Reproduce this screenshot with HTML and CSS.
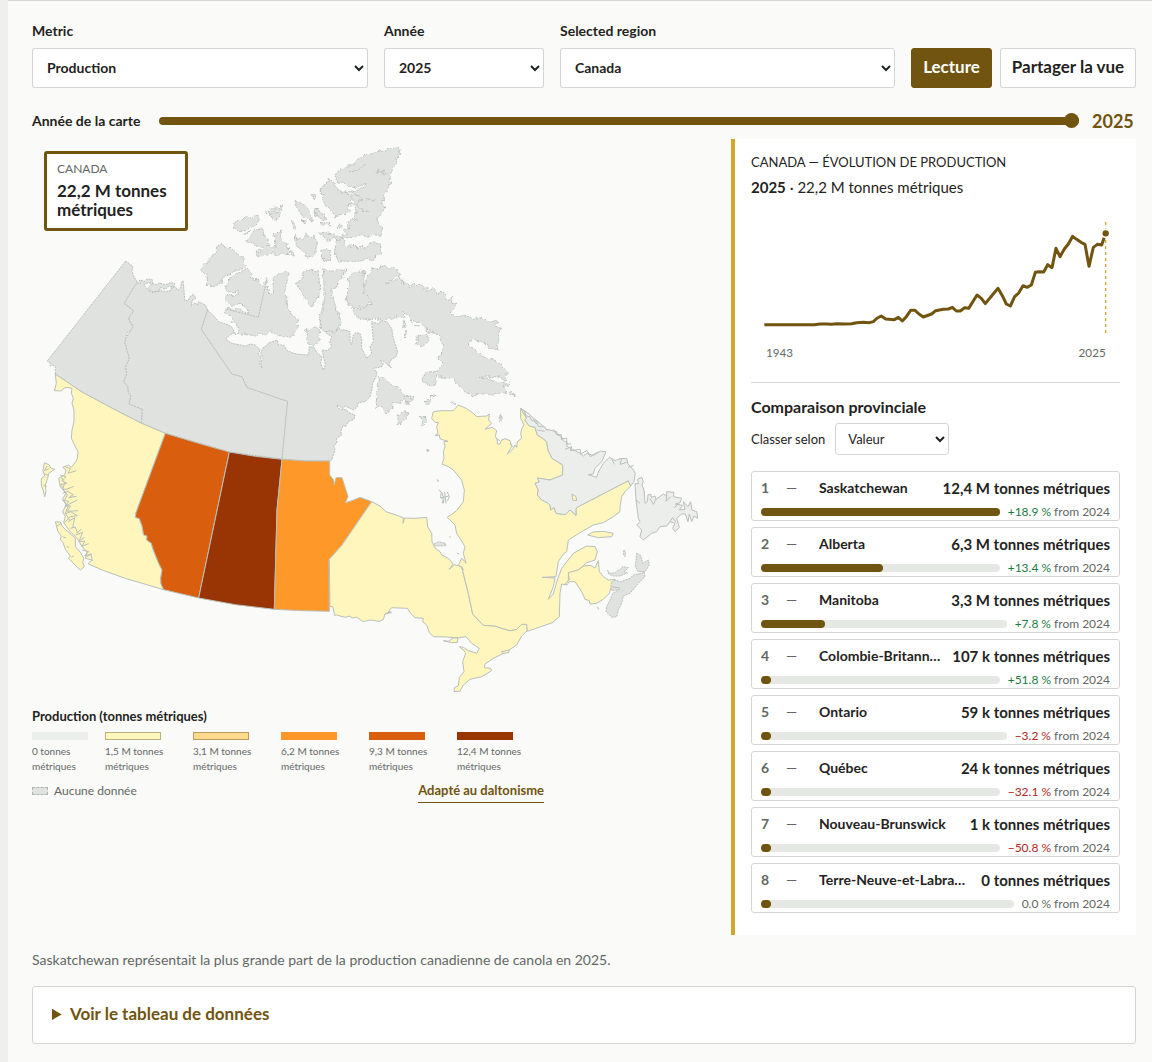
FILE: index.html
```html
<!DOCTYPE html>
<html lang="fr">
<head>
<meta charset="utf-8">
<meta name="viewport" content="width=device-width, initial-scale=1">
<title>Canola – Production</title>
<link rel="stylesheet" href="styles.css">
</head>
<body>
<main class="explorer">
  <form class="controls">
    <div class="field"><label for="metric">Metric</label><select id="metric"><option>Production</option></select></div>
    <div class="field"><label for="year">Année</label><select id="year"><option>2025</option></select></div>
    <div class="field"><label for="region">Selected region</label><select id="region"><option>Canada</option></select></div>
    <div class="actions">
      <button type="button" class="btn btn-primary">Lecture</button>
      <button type="button" class="btn btn-share">Partager la vue</button>
    </div>
  </form>
  <div class="timeline">
    <label for="map-year">Année de la carte</label>
    <input id="map-year" type="range" min="1943" max="2025" value="2025">
    <output for="map-year">2025</output>
  </div>
  <div class="workspace">
    <section class="map-panel">
      <div class="map">
        <div class="map-card"><span class="map-card-name">Canada</span><strong>22,2 M tonnes métriques</strong></div>
        <svg class="map-svg" viewBox="0 -273 2049 1680" role="img" aria-label="Carte du Canada">
          <defs>
            <filter id="coast" x="-5%" y="-5%" width="110%" height="110%">
              <feTurbulence type="fractalNoise" baseFrequency="0.05" numOctaves="2" seed="4" result="n"/>
              <feDisplacementMap in="SourceGraphic" in2="n" scale="22" xChannelSelector="R" yChannelSelector="G"/>
            </filter>
          </defs>
          <g class="nodata">
            <path d="M281 93L303 110L300 122L304 136L316 157L300 180L290 200L277 220L305 242L298 258L290 264L294 278L304 290L298 303L285 308L281 325L279 340L288 360L292 385L290 402L281 410L284 432L280 448L275 455L288 470L289 488L297 498L291 522L310 530L331 537L329 580L260 545L150 486L70 432L70 410L62 405L55 408L54 398L46 393Z"/>
            <path d="M316 157L325 162L322 150L338 154L345 147L360 148L362 160L348 158L335 164L345 176L352 170L360 160L375 165L382 158L400 165L415 158L428 160L425 172L410 168L400 178L385 172L382 184L362 185L350 180L358 188L390 182L400 185L420 180L416 170L430 170L436 180L446 174L448 158L453 152L456 180L458 212L468 212L474 200L484 193L492 204L480 212L478 226L490 218L496 226L500 215L520 225L527 240L508 298L600 432L630 440L645 472L767 514L750 687L592 666L400 610L329 580L331 537L310 530L291 522L297 498L289 488L288 470L275 455L284 432L281 410L292 385L279 340L281 325L304 290L290 264L305 242L277 220L300 180Z"/>
            <path d="M527 240L545 258L560 275L575 280L590 285L600 292L612 315L606 308L590 318L580 328L600 340L620 344L640 348L655 342L670 345L685 360L678 372L688 380L682 400L690 414L686 396L694 385L686 370L692 355L712 338L735 330L740 345L755 345L765 362L785 370L800 373L830 375L832 350L845 352L856 370L870 380L866 400L874 420L880 405L876 386L870 360L885 362L900 350L893 336L900 320L886 312L868 295L864 262L872 230L882 208L896 210L904 226L909 240L924 250L914 275L924 300L939 300L954 305L954 330L959 345L964 315L972 308L984 310L989 330L989 355L1004 385L1019 370L1014 350L1024 335L1019 275L1040 282L1048 272L1064 275L1079 295L1084 325L1097 365L1092 380L1079 388L1070 402L1079 415L1064 402L1050 390L1044 392L1054 400L1050 410L1024 415L1034 425L1034 435L1022 460L1020 478L1014 500L999 515L979 518L976 530L964 540L940 528L934 535L914 525L920 536L944 540L950 548L969 555L966 568L950 574L940 590L934 585L926 605L929 615L914 625L914 640L905 646L909 660L899 690L893 693L820 693L750 687L767 514L645 472L630 440L600 432L508 298Z"/>
          </g>
          <g class="nodata" filter="url(#coast)" transform="translate(474 -270)">
            <path d="M82 312L115 320L140 340L160 355L172 380L130 395L100 415L85 435L50 437L48 405L30 388L55 360L82 335Z"/>
            <path d="M105 435L130 405L175 388L185 400L180 415L205 420L210 435L230 418L235 440L240 465L250 465L250 410L268 405L280 395L297 400L290 430L285 450L290 500L325 545L320 570L300 590L260 590L245 570L225 585L180 585L145 580L140 555L120 535L105 520L110 505L150 510L175 520L180 510L155 495L110 490L105 475L110 465L145 462L145 455L110 455Z"/>
            <path d="M318 430L345 410L335 395L385 395L390 460L375 485L362 500L345 480L330 450Z"/>
            <path d="M400 390L465 390L445 435L425 450L430 475L450 545L440 575L395 570L390 545L402 490L402 440Z"/>
            <path d="M350 570L375 560L395 575L390 600L370 615L350 600Z"/>
            <path d="M130 250L175 230L205 228L208 245L185 262L150 272L135 268ZM170 300L195 272L215 270L235 300L235 320L258 320L255 285L270 270L275 305L295 310L295 340L265 345L245 340L215 352L197 345L200 335L220 325L190 315Z"/>
            <path d="M238 220L265 218L270 235L250 243ZM225 217L245 215L240 205L275 198L275 212ZM155 285L180 274L162 290ZM315 185L330 185L350 205L368 240L345 235L325 215ZM378 208L390 212L410 238L395 243L380 228ZM303 240L317 265L308 262ZM335 242L347 240L345 248Z"/>
            <path d="M315 285L320 300L335 302L345 285L375 288L380 320L372 345L355 352L350 335L330 328L312 310ZM392 335L410 328L425 345L420 365L400 362ZM300 335L314 336L308 346ZM393 248L422 248L420 258L395 255ZM445 250L457 258L445 265ZM362 165L372 162L375 174ZM388 275L420 280L435 290L425 302L400 295Z"/>
            <path d="M440 300L460 295L465 315L490 320L530 320L540 308L570 310L575 340L545 358L490 365L445 362L435 330Z"/>
            <path d="M415 118L430 125L435 142L470 155L485 180L475 200L480 215L460 225L440 230L425 215L400 190L395 160L400 130Z"/>
            <path d="M625 22L630 30L615 70L600 110L595 150L580 170L582 200L560 240L575 265L570 285L530 285L500 290L465 290L435 300L430 292L470 280L460 270L480 262L470 245L500 240L498 215L490 195L470 195L510 185L490 160L475 155L520 145L535 125L510 138L480 140L445 128L430 105L470 80L490 75L500 60L545 40L600 25Z"/>
            <path d="M455 155L490 165L520 180L500 190L480 170M500 195L520 210L540 215M565 90L580 95L560 100L590 102M480 95L510 85L530 70M550 180L530 175L525 190" fill="none"/>
          </g>
          <g class="nodata" filter="url(#coast)" transform="translate(894 60)">
            <path d="M152 52L190 50L212 70L215 82L195 78L170 98L190 95L200 85L215 85L215 98L230 95L240 105L242 118L252 104L270 102L278 118L290 108L295 122L308 118L320 125L322 138L330 124L350 130L345 145L365 145L365 160L383 160L370 172L362 190L385 200L400 195L430 205L445 200L470 212L500 215L498 228L512 232L504 245L514 262L504 275L509 300L480 295L475 282L455 275L425 268L412 285L430 300L460 320L490 328L515 345L530 365L526 388L495 380L450 382L500 395L540 400L520 408L530 430L490 435L450 432L430 438L400 420L370 390L330 380L320 365L342 345L322 325L335 305L337 270L310 245L270 225L250 210L220 185L225 205L200 200L170 205L110 210L80 200L65 180L115 170L125 160L105 140L100 110L110 80L125 60Z"/>
            <path d="M60 80L75 65L105 62L98 90L105 130L122 155L115 168L62 175L52 140ZM262 250L290 250L293 275L280 292L260 285ZM220 205L226 228L220 232ZM228 240L232 258L226 262ZM240 210L250 218ZM255 228L268 232ZM290 240L312 250L300 254Z"/>
            <path d="M145 375L155 380L165 395L200 410L222 430L245 440L245 455L215 455L190 460L180 480L168 488L155 470L135 472L142 440L145 410ZM222 440L250 438L252 450L235 460ZM280 370L300 365L320 370L318 400L300 410L280 400ZM205 495L230 487L228 505L205 522L200 505ZM270 500L285 500L287 520L275 530ZM285 452L300 448L305 458L290 460ZM300 440L318 438L312 444ZM508 498L516 500L512 512ZM535 430L545 428L554 440L545 440ZM290 602L298 602ZM362 460L374 460Z"/>
          </g>
          <path class="boundary" d="M704 150L679 262L579 236"/>
          <path class="v1" d="M70 432L150 486L260 545L329 580L400 610L312 848L310 862L322 866L330 888L335 915L345 918L344 930L358 940L362 955L372 980L380 1000L390 1020L386 1045L387 1062L395 1079L280 1045L210 1020L168 1001L180 990L160 985L165 965L150 950L140 932L130 920L115 905L95 878L100 860L92 846L102 825L92 806L102 790L85 770L80 745L98 735L102 720L92 712L110 705L118 712L135 690L138 665L130 650L118 625L120 600L126 575L126 540L120 520L124 505L118 490L120 475L105 472L95 475L88 483L67 482L73 460Z"/>
          <path class="inlet" d="M98 710l18 6l-8 14l25-8M84 735l18 5l-12 12l15 8l-20 4l14 15l27-10M92 790l14-6l18 10l-14 9l24-4M90 810l20 4l-10 14l36-18M98 830l18-3l-10 17l32-2M98 852l18-7l20 12l-22 3l-16 18M108 875l20-12l-6 30M115 895l15-4l6 18l12-12M130 915l22-8l-10 25l16-10M140 935l18-2l-8 16l20-8M150 960l20 5l-12 12l22-5M165 980l12-8l4 20M88 742l10 18l-6 16l14 18l-10 20l12 16l-8 20l14 22"/>
          <path class="v1" d="M38 698L52 705L56 714L68 718L50 730L47 745L40 765L42 785L38 800L33 780L28 765L28 745L38 738L33 722L35 708ZM70 875L85 876L90 888L100 898L130 925L130 950L146 968L155 985L152 996L157 1010L145 1020L130 1006L110 985L115 978L100 958L94 940L85 928L88 918L78 905Z"/>
          <path class="inlet" d="M45 708l-8 14l14-6M38 732l12 4M34 765l10 4M75 888l14-8M92 920l10 4M104 950l8 2M118 982l8-5"/>
          <path class="v4" d="M400 610L500 640L592 666L500 1104L395 1079L387 1062L386 1045L390 1020L380 1000L372 980L362 955L358 940L344 930L345 918L335 915L330 888L322 866L310 862L312 848Z"/>
          <path class="v5" d="M592 666L670 679L750 688L735 840L727 1138L610 1124L500 1104Z"/>
          <path class="v3" d="M750 688L820 693L893 693L893 735L905 750L907 765L912 743L930 743L948 800L940 818L960 812L984 802L1019 815L930 945L891 988L892 1144L810 1142L727 1138L735 840Z"/>
          <g transform="translate(864 480)">
            <path class="v1" d="M155 335L180 348L198 365L225 374L250 383L249 400L254 384L285 385L320 382L323 410L335 430L336 455L345 474L360 485L365 495L385 505L400 522L388 538L402 524L425 530L435 570L445 610L458 672L490 706L525 708L545 715L570 722L590 718L605 703L620 703L622 722L605 738L590 765L555 788L520 805L495 822L493 833L512 835L515 842L485 860L450 868L430 885L420 903L402 905L403 893L415 888L418 862L432 845L428 815L437 790L432 782L418 770L430 772L445 782L470 790L478 775L455 760L438 740L413 744L380 741L340 740L328 728L320 705L308 695L310 685L285 683L272 670L262 655L215 653L205 665L212 668L195 672L190 688L180 694L150 690L130 695L110 682L95 684L90 678L75 682L50 675L44 676L38 650L30 650L28 508L66 465ZM370 752L385 754L400 744L413 742L413 757L395 758Z"/>
            <path class="v1" d="M340 65L365 62L400 62L415 45L440 56L460 70L470 80L500 78L508 72L506 90L515 100L495 118L516 112L530 122L526 140L532 150L532 162L540 162L545 150L555 146L570 152L575 170L562 192L580 176L585 165L590 172L592 155L605 145L602 130L606 115L612 105L602 85L602 55L620 85L614 90L628 108L645 112L652 135L668 145L680 155L684 180L696 205L728 225L728 255L710 262L690 270L652 264L658 276L645 280L655 300L652 315L665 330L682 338L690 345L692 360L702 352L708 370L735 374L750 360L768 376L768 355L775 350L925 272L932 288L915 305L905 320L900 350L900 365L880 380L850 398L820 405L780 428L745 450L740 485L730 492L715 515L708 560L667 562L705 564L700 590L685 628L700 612L712 570L725 535L760 490L800 468L825 470L832 485L825 510L800 518L775 540L745 550L745 570L740 585L725 582L720 610L718 680L705 690L700 697L622 724L620 703L605 703L590 718L570 722L545 715L525 708L490 706L458 672L445 610L425 530L430 540L416 524L425 505L435 515L438 520L430 490L435 470L420 445L410 430L405 405L382 382L410 362L430 335L433 300L425 270L400 240L385 230L366 222L372 205L370 185L375 170L372 155L384 154L370 150L360 146L358 135L345 137L354 130L350 110L355 98L345 97L335 85Z"/>
            <path class="v0" d="M602 55L625 70L640 84L660 100L680 118L710 125L712 134L725 140L730 152L742 158L740 168L752 175L780 190L790 198L800 190L820 196L842 183L858 186L845 215L825 235L820 252L805 254L830 262L835 246L850 220L868 202L885 212L900 206L920 205L924 222L940 240L946 250L942 275L932 288L925 272L775 350L768 355L768 376L750 360L735 374L708 370L702 352L692 360L690 345L682 338L665 330L652 315L655 300L645 280L658 276L652 264L690 270L710 262L728 255L728 225L696 205L684 180L680 155L668 145L652 135L645 112L628 108L614 90L620 85Z"/>
            <path class="v0" d="M965 262L970 275L966 285L972 300L975 340L982 335L984 315L992 312L994 322L1005 318L1008 328L1030 312L1040 318L1040 305L1062 307L1060 320L1085 325L1080 338L1066 342L1088 346L1078 360L1095 358L1090 335L1104 350L1112 335L1116 360L1130 365L1133 385L1122 378L1115 395L1108 372L1104 395L1096 372L1085 372L1070 385L1078 412L1065 425L1058 415L1065 400L1050 395L1040 408L1020 410L1010 425L995 430L970 450L960 440L965 420L950 405L960 395L955 385L948 330L945 280L955 282L953 268Z"/>
            <path class="inlet" d="M612 60l6 18l12 2l5 12l15 2l5 16l18 0l8 12M700 118l10 16l14 0l0 14l16-4l0 18l14 0M735 178l20-8l-4 12l30-4l0 14l20-10l10 18l22-14M875 205l8 18M905 205l-5 18l20-6M925 232l16-6M640 88l10 14M652 120l22 4M990 325l10 18l8-16M1040 316l-2 18l14-14M1075 340l-12 14M1050 395l8-12l10 14"/>
            <path class="v1" d="M803 435L820 426L850 424L880 430L875 440L835 443ZM756 312L768 320L770 332L758 330ZM545 785L568 780L566 788L548 790Z"/>
            <path class="v1" d="M745 548L775 540L790 528L812 526L825 534L835 512L838 545L850 560L865 570L885 568L882 582L872 595L868 610L850 628L830 640L810 642L808 632L795 628L785 605L770 582L765 575L748 575L740 585L736 580L748 570Z"/>
            <path class="nodata" d="M862 540L870 550L885 548L905 535L907 530L925 533L912 545L922 548L900 558L880 558L866 552ZM875 575L888 570L900 576L930 565L940 555L965 550L972 545L975 560L955 580L930 610L910 618L905 640L895 660L890 680L875 682L858 665L860 650L872 625L878 610L898 598L876 602L872 590ZM950 490L962 496L968 520L985 510L988 525L975 545L955 545L946 530ZM912 480L917 488L915 500L910 492Z"/>
            <path class="nodata" d="M342 462L355 455L376 460L378 467L345 468ZM540 78L547 80L544 92L539 88ZM320 182L328 180L324 186ZM352 268L355 276ZM388 440L392 442ZM412 490L418 492Z"/>
            <path class="inlet" d="M356 300l8 6l-2 16l8 8l-4 10M366 308l6 20l-2 12M374 306l4 34M382 306l6 14l-6 14M360 324l26-6M948 330l12 10M875 590l24 4M832 650l4 8M195 672l16-8l4 6M530 145l10 8M570 160l10 12"/>
          </g>
        </svg>
      </div>
      <div class="legend">
        <h2>Production (tonnes métriques)</h2>
        <ol class="ramp">
          <li><i class="swatch s0"></i>0 tonnes métriques</li>
          <li><i class="swatch s1"></i>1,5 M tonnes métriques</li>
          <li><i class="swatch s2"></i>3,1 M tonnes métriques</li>
          <li><i class="swatch s3"></i>6,2 M tonnes métriques</li>
          <li><i class="swatch s4"></i>9,3 M tonnes métriques</li>
          <li><i class="swatch s5"></i>12,4 M tonnes métriques</li>
        </ol>
        <div class="legend-foot"><span class="none"><i></i>Aucune donnée</span><button type="button" class="palette">Adapté au daltonisme</button></div>
      </div>
    </section>
    <aside class="insights">
      <h2 class="trend-title">Canada — évolution de production</h2>
      <p class="trend-value"><strong>2025</strong> · 22,2 M tonnes métriques</p>
      <svg class="trend" viewBox="78 30 1107 480" role="img" aria-label="Évolution de 1943 à 2025">
        <line class="marker" x1="1142" y1="66" x2="1142" y2="400"/>
        <polyline class="series" points="118,374 268,374 285,372 305,372 320,373 335,371 360,372 380,371 395,368 415,367 433,368 445,365 457,354 469,348 482,357 508,359 520,352 532,363 544,350 557,331 570,331 582,342 595,351 620,342 632,332 655,328 670,327 682,322 694,333 706,333 719,323 731,325 756,285 769,295 781,311 793,296 819,265 832,287 844,312 856,318 869,290 881,279 894,257 906,262 919,255 931,217 943,215 956,216 968,194 981,203 993,145 1005,170 1018,147 1030,132 1043,109 1055,118 1068,127 1080,133 1092,199 1105,142 1117,133 1130,135 1142,100"/>
        <circle class="halo" cx="1142" cy="100" r="12"/>
        <text x="123" y="471">1943</text><text x="1142" y="471" text-anchor="end">2025</text>
      </svg>
      <section class="ranking">
        <h3>Comparaison provinciale</h3>
        <div class="sort"><label for="sort">Classer selon</label><select id="sort"><option>Valeur</option></select></div>
        <ol class="ranks">
          <li><div class="head"><b class="pos">1</b><span class="move">—</span><strong class="name">Saskatchewan</strong><strong class="amount">12,4 M tonnes métriques</strong></div><div class="foot"><div class="bar"><i style="width:100%"></i></div><span><em class="up">+18.9&#8239;%</em> from 2024</span></div></li>
          <li><div class="head"><b class="pos">2</b><span class="move">—</span><strong class="name">Alberta</strong><strong class="amount">6,3 M tonnes métriques</strong></div><div class="foot"><div class="bar"><i style="width:51%"></i></div><span><em class="up">+13.4&#8239;%</em> from 2024</span></div></li>
          <li><div class="head"><b class="pos">3</b><span class="move">—</span><strong class="name">Manitoba</strong><strong class="amount">3,3 M tonnes métriques</strong></div><div class="foot"><div class="bar"><i style="width:26%"></i></div><span><em class="up">+7.8&#8239;%</em> from 2024</span></div></li>
          <li><div class="head"><b class="pos">4</b><span class="move">—</span><strong class="name">Colombie-Britannique</strong><strong class="amount">107 k tonnes métriques</strong></div><div class="foot"><div class="bar"><i style="width:1%"></i></div><span><em class="up">+51.8&#8239;%</em> from 2024</span></div></li>
          <li><div class="head"><b class="pos">5</b><span class="move">—</span><strong class="name">Ontario</strong><strong class="amount">59 k tonnes métriques</strong></div><div class="foot"><div class="bar"><i style="width:0%"></i></div><span><em class="down">−3.2&#8239;%</em> from 2024</span></div></li>
          <li><div class="head"><b class="pos">6</b><span class="move">—</span><strong class="name">Québec</strong><strong class="amount">24 k tonnes métriques</strong></div><div class="foot"><div class="bar"><i style="width:0%"></i></div><span><em class="down">−32.1&#8239;%</em> from 2024</span></div></li>
          <li><div class="head"><b class="pos">7</b><span class="move">—</span><strong class="name">Nouveau-Brunswick</strong><strong class="amount">1 k tonnes métriques</strong></div><div class="foot"><div class="bar"><i style="width:0%"></i></div><span><em class="down">−50.8&#8239;%</em> from 2024</span></div></li>
          <li><div class="head"><b class="pos">8</b><span class="move">—</span><strong class="name">Terre-Neuve-et-Labrador</strong><strong class="amount">0 tonnes métriques</strong></div><div class="foot"><div class="bar"><i style="width:0%"></i></div><span><em>0.0&#8239;%</em> from 2024</span></div></li>
        </ol>
      </section>
    </aside>
  </div>
  <p class="summary">Saskatchewan représentait la plus grande part de la production canadienne de canola en 2025.</p>
  <details class="data"><summary>Voir le tableau de données</summary></details>
</main>
</body>
</html>
```
FILE: styles.css
```css
* { box-sizing: border-box; }
body {
  margin: 0;
  padding-left: 8px;
  background: #eeefee;
  color: #1f2321;
  font: 14px/20px "Trebuchet MS", Lato, "Open Sans", sans-serif;
}
h2, h3, p, ol { margin: 0; padding: 0; }
ol { list-style: none; }
select, button, input { font: inherit; color: inherit; margin: 0; }
.explorer {
  min-height: 100vh;
  padding: 20px 16px 18px 24px;
  background: #fafaf8;
  border-top: 1px solid #d4d6d4;
}
.controls {
  display: grid;
  grid-template-columns: minmax(0, 336fr) minmax(0, 160fr) minmax(0, 335fr) auto;
  gap: 16px;
  align-items: end;
  font-weight: 700;
}
.field { display: grid; gap: 7px; }
select {
  width: 100%;
  height: 40px;
  padding: 0 10px 2px;
  border: 1px solid #d4d6d4;
  border-radius: 3px;
  background: #fff;
}
.actions { display: flex; gap: 8px; }
.btn {
  height: 40px;
  padding: 0 0 2px;
  border: 1px solid #d4d6d4;
  border-radius: 3px;
  background: #fff;
  font-size: 17px;
  font-weight: 700;
}
.btn-primary { width: 81px; background: #70540f; border-color: #70540f; color: #fff; }
.btn-share { width: 136px; }
.timeline {
  display: flex;
  align-items: center;
  gap: 13px;
  height: 36px;
  margin-top: 15px;
  font-weight: 700;
}
.timeline label { min-width: 114px; }
.timeline input {
  flex: 1;
  min-width: 0;
  height: 14px;
  appearance: none;
  background: none;
}
.timeline input::-webkit-slider-runnable-track { height: 8px; border-radius: 4px; background: #70540f; }
.timeline input::-webkit-slider-thumb {
  appearance: none;
  width: 15px;
  height: 15px;
  margin-top: -4px;
  border-radius: 50%;
  background: #70540f;
}
.timeline output { width: 44px; color: #70540f; font-size: 18px; }
.workspace { display: grid; grid-template-columns: minmax(0, 683fr) minmax(0, 405fr); gap: 16px; }
.map { position: relative; }
.map-svg { display: block; width: 100%; }
.map-card {
  position: absolute;
  top: 12px;
  left: 12px;
  width: 144px;
  padding: 5px 10px 9px;
  border: 3px solid #70540f;
  border-radius: 3px;
  background: #fff;
}
.map-card-name { display: block; color: #626864; font-size: 12px; line-height: 19px; text-transform: uppercase; }
.map-card strong { display: block; margin-top: 3px; font-size: 17px; line-height: 19px; }
.map-svg path { stroke: #b9c0bb; stroke-width: 3; stroke-linejoin: round; }
.map-svg .nodata, .map-svg .nodata path { fill: #e0e2df; stroke-dasharray: 6 3; }
.map-svg .boundary, .map-svg .inlet { fill: none; }
.map-svg .boundary { stroke-dasharray: 6 3; }
.map-svg .v0 { fill: #eceeec; }
.map-svg .v1 { fill: #fff6bd; }
.map-svg .v3 { fill: #fe9929; }
.map-svg .v4 { fill: #d95f0e; }
.map-svg .v5 { fill: #993404; }
.legend { max-width: 512px; margin-top: 7px; }
.legend h2 { font-size: 13px; line-height: 20px; }
.ramp { display: flex; margin-top: 6px; color: #626864; font-size: 10px; line-height: 15px; }
.ramp li { flex: 0 0 88px; padding-right: 18px; }
.ramp li:first-child { flex-basis: 73px; padding-right: 12px; }
.swatch { display: block; width: 56px; height: 8px; margin-bottom: 4px; }
.s0 { background: #eceeec; }
.s1 { background: #fff6bd; border: 1px solid #b9b183; }
.s2 { background: #fed98e; border: 1px solid #bb9c60; }
.s3 { background: #fe9929; }
.s4 { background: #d95f0e; }
.s5 { background: #993404; }
.legend-foot { display: flex; justify-content: space-between; margin-top: 4px; color: #626864; font-size: 12px; }
.none { display: flex; align-items: center; gap: 6px; }
.none i { width: 16px; height: 8px; background: #e0e2df; border: 1px dashed #b0b5b1; }
.palette { height: 25px; padding: 0; border: 0; border-bottom: 1px solid #70540f; background: none; color: #70540f; font-size: 13px; font-weight: 700; }
.insights { padding: 12px 16px 22px; border-left: 4px solid #d4a72c; background: #fff; }
.trend-title { font-size: 13px; line-height: 22px; font-weight: 400; text-transform: uppercase; }
.trend-value { margin-top: 3px; font-size: 15px; line-height: 22px; }
.trend { display: block; width: 100%; margin-top: 12px; }
.series { fill: none; stroke: #70540f; stroke-width: 9; stroke-linejoin: round; }
.marker { stroke: #d4a72c; stroke-width: 4; stroke-dasharray: 9 9; }
.halo { fill: #70540f; stroke: #fff; stroke-width: 5; }
.trend text { fill: #626864; font-size: 35px; }
.ranking { margin-top: 12px; padding-top: 14px; border-top: 1px solid #d4d6d4; }
.ranking h3 { font-size: 16px; line-height: 20px; }
.sort { display: flex; align-items: center; gap: 10px; margin-top: 6px; font-size: 13px; }
.sort select { width: 114px; height: 32px; padding: 0 8px; }
.ranks { display: grid; gap: 6px; margin-top: 16px; }
.ranks li { height: 50px; padding: 6px 9px 0; border: 1px solid #d4d6d4; border-radius: 3px; }
.head { display: grid; grid-template-columns: 16px 24px minmax(0, 1fr) auto; column-gap: 9px; line-height: 20px; }
.pos, .move { color: #626864; }
.name { overflow: hidden; text-overflow: ellipsis; white-space: nowrap; }
.amount { font-size: 15px; }
.foot { display: flex; align-items: center; gap: 8px; margin-top: 4px; color: #626864; font-size: 12px; }
.bar { flex: 1; height: 8px; border-radius: 4px; background: #e6e8e3; }
.bar i { display: block; height: 8px; min-width: 10px; border-radius: 4px; background: #70540f; }
.foot em { font-style: normal; }
.foot .up { color: #1b7a43; }
.foot .down { color: #b3261e; }
.summary { margin-top: 15px; color: #626864; font-size: 14px; }
.data { margin-top: 16px; padding: 16px 19px 18px; border: 1px solid #d4d6d4; border-radius: 3px; background: #fff; }
.data summary { color: #70540f; font-size: 17px; font-weight: 700; line-height: 22px; }
```
